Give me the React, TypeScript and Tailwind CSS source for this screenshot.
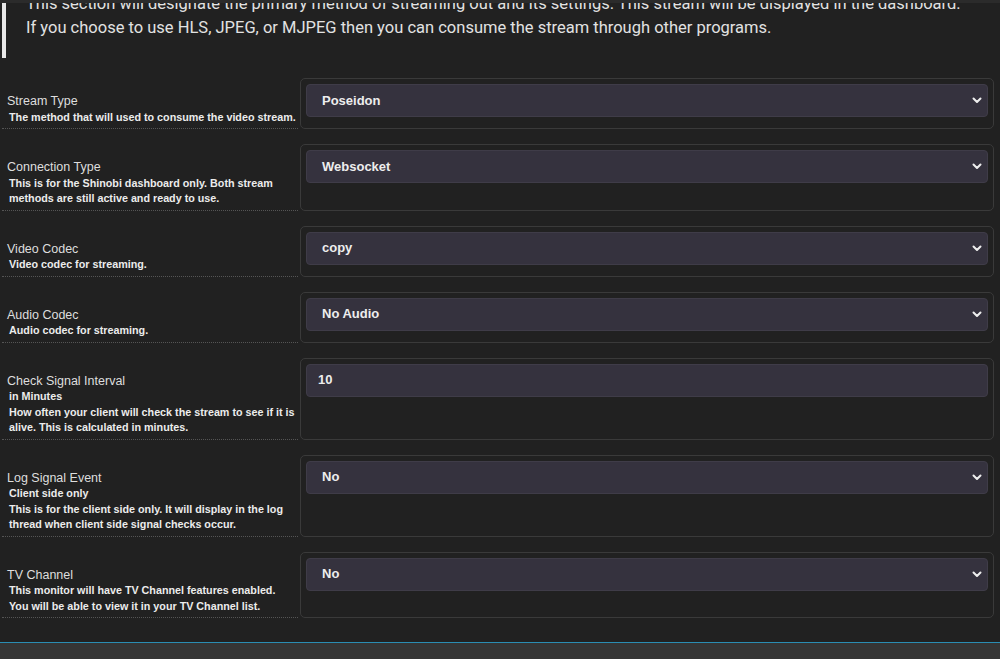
import React from 'react';

type Field = {
  label: string;
  notes: string[];
  value: string;
  kind: 'select' | 'input';
};

const fields: Field[] = [
  { label: 'Stream Type', notes: ['The method that will used to consume the video stream.'], value: 'Poseidon', kind: 'select' },
  {
    label: 'Connection Type',
    notes: ['This is for the Shinobi dashboard only. Both stream', 'methods are still active and ready to use.'],
    value: 'Websocket',
    kind: 'select',
  },
  { label: 'Video Codec', notes: ['Video codec for streaming.'], value: 'copy', kind: 'select' },
  { label: 'Audio Codec', notes: ['Audio codec for streaming.'], value: 'No Audio', kind: 'select' },
  {
    label: 'Check Signal Interval',
    notes: ['in Minutes', 'How often your client will check the stream to see if it is', 'alive. This is calculated in minutes.'],
    value: '10',
    kind: 'input',
  },
  {
    label: 'Log Signal Event',
    notes: ['Client side only', 'This is for the client side only. It will display in the log', 'thread when client side signal checks occur.'],
    value: 'No',
    kind: 'select',
  },
  {
    label: 'TV Channel',
    notes: ['This monitor will have TV Channel features enabled.', 'You will be able to view it in your TV Channel list.'],
    value: 'No',
    kind: 'select',
  },
];

function Chevron() {
  return (
    <svg width="10" height="7" viewBox="0 0 10 7" className="shrink-0">
      <polyline points="1.5,1.5 5,5 8.5,1.5" fill="none" stroke="#eeeeee" strokeWidth="2" strokeLinecap="round" strokeLinejoin="round" />
    </svg>
  );
}

function FieldRow({ field }: { field: Field }) {
  return (
    <div className="flex gap-[2px]">
      {/* label column */}
      <div className="w-[296px] shrink-0 border-b border-dotted border-[#555555] pl-[5px] pt-[15px] pb-[3px]">
        <div className="text-[12.5px] leading-[16.5px] text-[#dedede]">{field.label}</div>
        {field.notes.map((n) => (
          <div key={n} className="pl-[2px] text-[10.75px] font-bold leading-[15.5px] text-[#ececec]">
            {n}
          </div>
        ))}
      </div>

      {/* control column */}
      <div className="flex-1 rounded-[5px] border border-[#3a3a3a] p-[5px]">
        <div className="flex h-[33px] items-center justify-between rounded-[4px] border border-[#3f3c48] bg-[#35323e] pr-[5px]">
          <span className={`${field.kind === 'input' ? 'pl-[11px]' : 'pl-[15px]'} text-[13px] font-bold text-[#ededed]`}>
            {field.value}
          </span>
          {field.kind === 'select' && <Chevron />}
        </div>
      </div>
    </div>
  );
}

export default function App() {
  return (
    <div className="relative h-[659px] overflow-hidden bg-[#212121] font-['Liberation_Sans',Arial,sans-serif]">
      {/* header edge */}
      <div className="absolute inset-x-0 top-0 z-10 h-[3px] bg-[#2b2b2b]" />

      <blockquote className="ml-[2px] mt-[-26px] border-l-4 border-[#e8e8e8] py-[18px] pl-5 font-['Roboto',sans-serif] text-[16.5px] leading-[24px] text-[#e2e2e2]">
        <p>This section will designate the primary method of streaming out and its settings. This stream will be displayed in the dashboard.</p>
        <p>If you choose to use HLS, JPEG, or MJPEG then you can consume the stream through other programs.</p>
      </blockquote>

      <div className="mt-5 flex flex-col gap-[15px] pl-[2px] pr-[6px]">
        {fields.map((f) => (
          <FieldRow key={f.label} field={f} />
        ))}
      </div>

      <div className="mt-[24px] h-[40px] border-t border-[#2a8db3] bg-[#353535]" />
    </div>
  );
}
